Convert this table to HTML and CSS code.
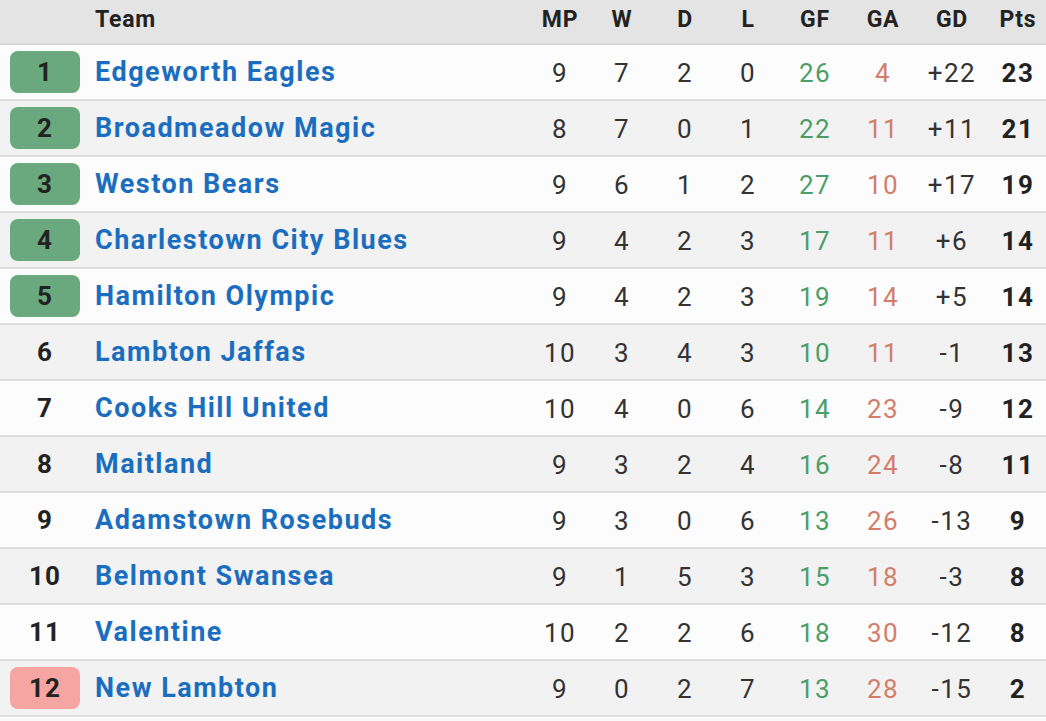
FILE: index.html
```html
<!DOCTYPE html>
<html>
<head>
<meta charset="utf-8">
<link rel="stylesheet" href="styles.css">
</head>
<body>
<div class="table">
  <div class="row head">
    <div class="c rank"></div>
    <div class="c team">Team</div>
    <div class="c n">MP</div>
    <div class="c n">W</div>
    <div class="c n">D</div>
    <div class="c n">L</div>
    <div class="c n">GF</div>
    <div class="c n">GA</div>
    <div class="c n">GD</div>
    <div class="c n">Pts</div>
  </div>
  <div class="row odd">
    <div class="c rank"><span class="badge up">1</span></div>
    <div class="c team"><a>Edgeworth Eagles</a></div>
    <div class="c n">9</div><div class="c n">7</div><div class="c n">2</div><div class="c n">0</div>
    <div class="c n gf">26</div><div class="c n ga">4</div><div class="c n">+22</div><div class="c n pts">23</div>
  </div>
  <div class="row even">
    <div class="c rank"><span class="badge up">2</span></div>
    <div class="c team"><a>Broadmeadow Magic</a></div>
    <div class="c n">8</div><div class="c n">7</div><div class="c n">0</div><div class="c n">1</div>
    <div class="c n gf">22</div><div class="c n ga">11</div><div class="c n">+11</div><div class="c n pts">21</div>
  </div>
  <div class="row odd">
    <div class="c rank"><span class="badge up">3</span></div>
    <div class="c team"><a>Weston Bears</a></div>
    <div class="c n">9</div><div class="c n">6</div><div class="c n">1</div><div class="c n">2</div>
    <div class="c n gf">27</div><div class="c n ga">10</div><div class="c n">+17</div><div class="c n pts">19</div>
  </div>
  <div class="row even">
    <div class="c rank"><span class="badge up">4</span></div>
    <div class="c team"><a>Charlestown City Blues</a></div>
    <div class="c n">9</div><div class="c n">4</div><div class="c n">2</div><div class="c n">3</div>
    <div class="c n gf">17</div><div class="c n ga">11</div><div class="c n">+6</div><div class="c n pts">14</div>
  </div>
  <div class="row odd">
    <div class="c rank"><span class="badge up">5</span></div>
    <div class="c team"><a>Hamilton Olympic</a></div>
    <div class="c n">9</div><div class="c n">4</div><div class="c n">2</div><div class="c n">3</div>
    <div class="c n gf">19</div><div class="c n ga">14</div><div class="c n">+5</div><div class="c n pts">14</div>
  </div>
  <div class="row even">
    <div class="c rank"><span class="badge">6</span></div>
    <div class="c team"><a>Lambton Jaffas</a></div>
    <div class="c n">10</div><div class="c n">3</div><div class="c n">4</div><div class="c n">3</div>
    <div class="c n gf">10</div><div class="c n ga">11</div><div class="c n">-1</div><div class="c n pts">13</div>
  </div>
  <div class="row odd">
    <div class="c rank"><span class="badge">7</span></div>
    <div class="c team"><a>Cooks Hill United</a></div>
    <div class="c n">10</div><div class="c n">4</div><div class="c n">0</div><div class="c n">6</div>
    <div class="c n gf">14</div><div class="c n ga">23</div><div class="c n">-9</div><div class="c n pts">12</div>
  </div>
  <div class="row even">
    <div class="c rank"><span class="badge">8</span></div>
    <div class="c team"><a>Maitland</a></div>
    <div class="c n">9</div><div class="c n">3</div><div class="c n">2</div><div class="c n">4</div>
    <div class="c n gf">16</div><div class="c n ga">24</div><div class="c n">-8</div><div class="c n pts">11</div>
  </div>
  <div class="row odd">
    <div class="c rank"><span class="badge">9</span></div>
    <div class="c team"><a>Adamstown Rosebuds</a></div>
    <div class="c n">9</div><div class="c n">3</div><div class="c n">0</div><div class="c n">6</div>
    <div class="c n gf">13</div><div class="c n ga">26</div><div class="c n">-13</div><div class="c n pts">9</div>
  </div>
  <div class="row even">
    <div class="c rank"><span class="badge">10</span></div>
    <div class="c team"><a>Belmont Swansea</a></div>
    <div class="c n">9</div><div class="c n">1</div><div class="c n">5</div><div class="c n">3</div>
    <div class="c n gf">15</div><div class="c n ga">18</div><div class="c n">-3</div><div class="c n pts">8</div>
  </div>
  <div class="row odd">
    <div class="c rank"><span class="badge">11</span></div>
    <div class="c team"><a>Valentine</a></div>
    <div class="c n">10</div><div class="c n">2</div><div class="c n">2</div><div class="c n">6</div>
    <div class="c n gf">18</div><div class="c n ga">30</div><div class="c n">-12</div><div class="c n pts">8</div>
  </div>
  <div class="row even">
    <div class="c rank"><span class="badge down">12</span></div>
    <div class="c team"><a>New Lambton</a></div>
    <div class="c n">9</div><div class="c n">0</div><div class="c n">2</div><div class="c n">7</div>
    <div class="c n gf">13</div><div class="c n ga">28</div><div class="c n">-15</div><div class="c n pts">2</div>
  </div>
</div>
</body>
</html>
```
FILE: styles.css
```css
html, body {
  margin: 0;
  padding: 0;
  background: #fafafa;
}
body {
  font-family: Roboto, "Liberation Sans", sans-serif;
  color: #333;
  width: 1046px;
  overflow: hidden;
}
.table {
  display: flex;
  flex-direction: column;
}
.row {
  display: grid;
  grid-template-columns: 88px 440px 64px 60px 66px 60px 74px 62px 76px 56px;
  align-items: center;
  height: 54px;
  border-bottom: 2px solid #dedede;
}
.row.head {
  height: 39px;
  padding-bottom: 4px;
  background: #e4e4e4;
  border-bottom: 2px solid #d6d6d6;
  font-size: 23px;
  font-weight: 700;
  color: #222;
  letter-spacing: 0.8px;
}
.row.odd { background: #fcfcfc; }
.row.even { background: #f2f2f2; }
.c {
  white-space: nowrap;
}
.team {
  padding-left: 7px;
}
.team a {
  color: #1b6ebf;
  font-size: 27px;
  font-weight: 700;
  letter-spacing: 1.5px;
}
.n {
  text-align: center;
  font-size: 26px;
  letter-spacing: 1.5px;
  padding-top: 1px;
}
.head .n { font-size: 23px; letter-spacing: 0.8px; padding-top: 0; }
.rank {
  display: flex;
  padding-left: 10px;
}
.badge {
  width: 70px;
  height: 42px;
  border-radius: 8px;
  display: flex;
  align-items: center;
  justify-content: center;
  font-size: 26px;
  font-weight: 700;
  color: #222;
  letter-spacing: 1px;
}
.badge.up { background: #6aa97d; }
.badge.down { background: #f5a5a2; }
.gf { color: #4b9e68; }
.ga { color: #d27e6a; }
.pts { font-weight: 700; color: #222; }
```
